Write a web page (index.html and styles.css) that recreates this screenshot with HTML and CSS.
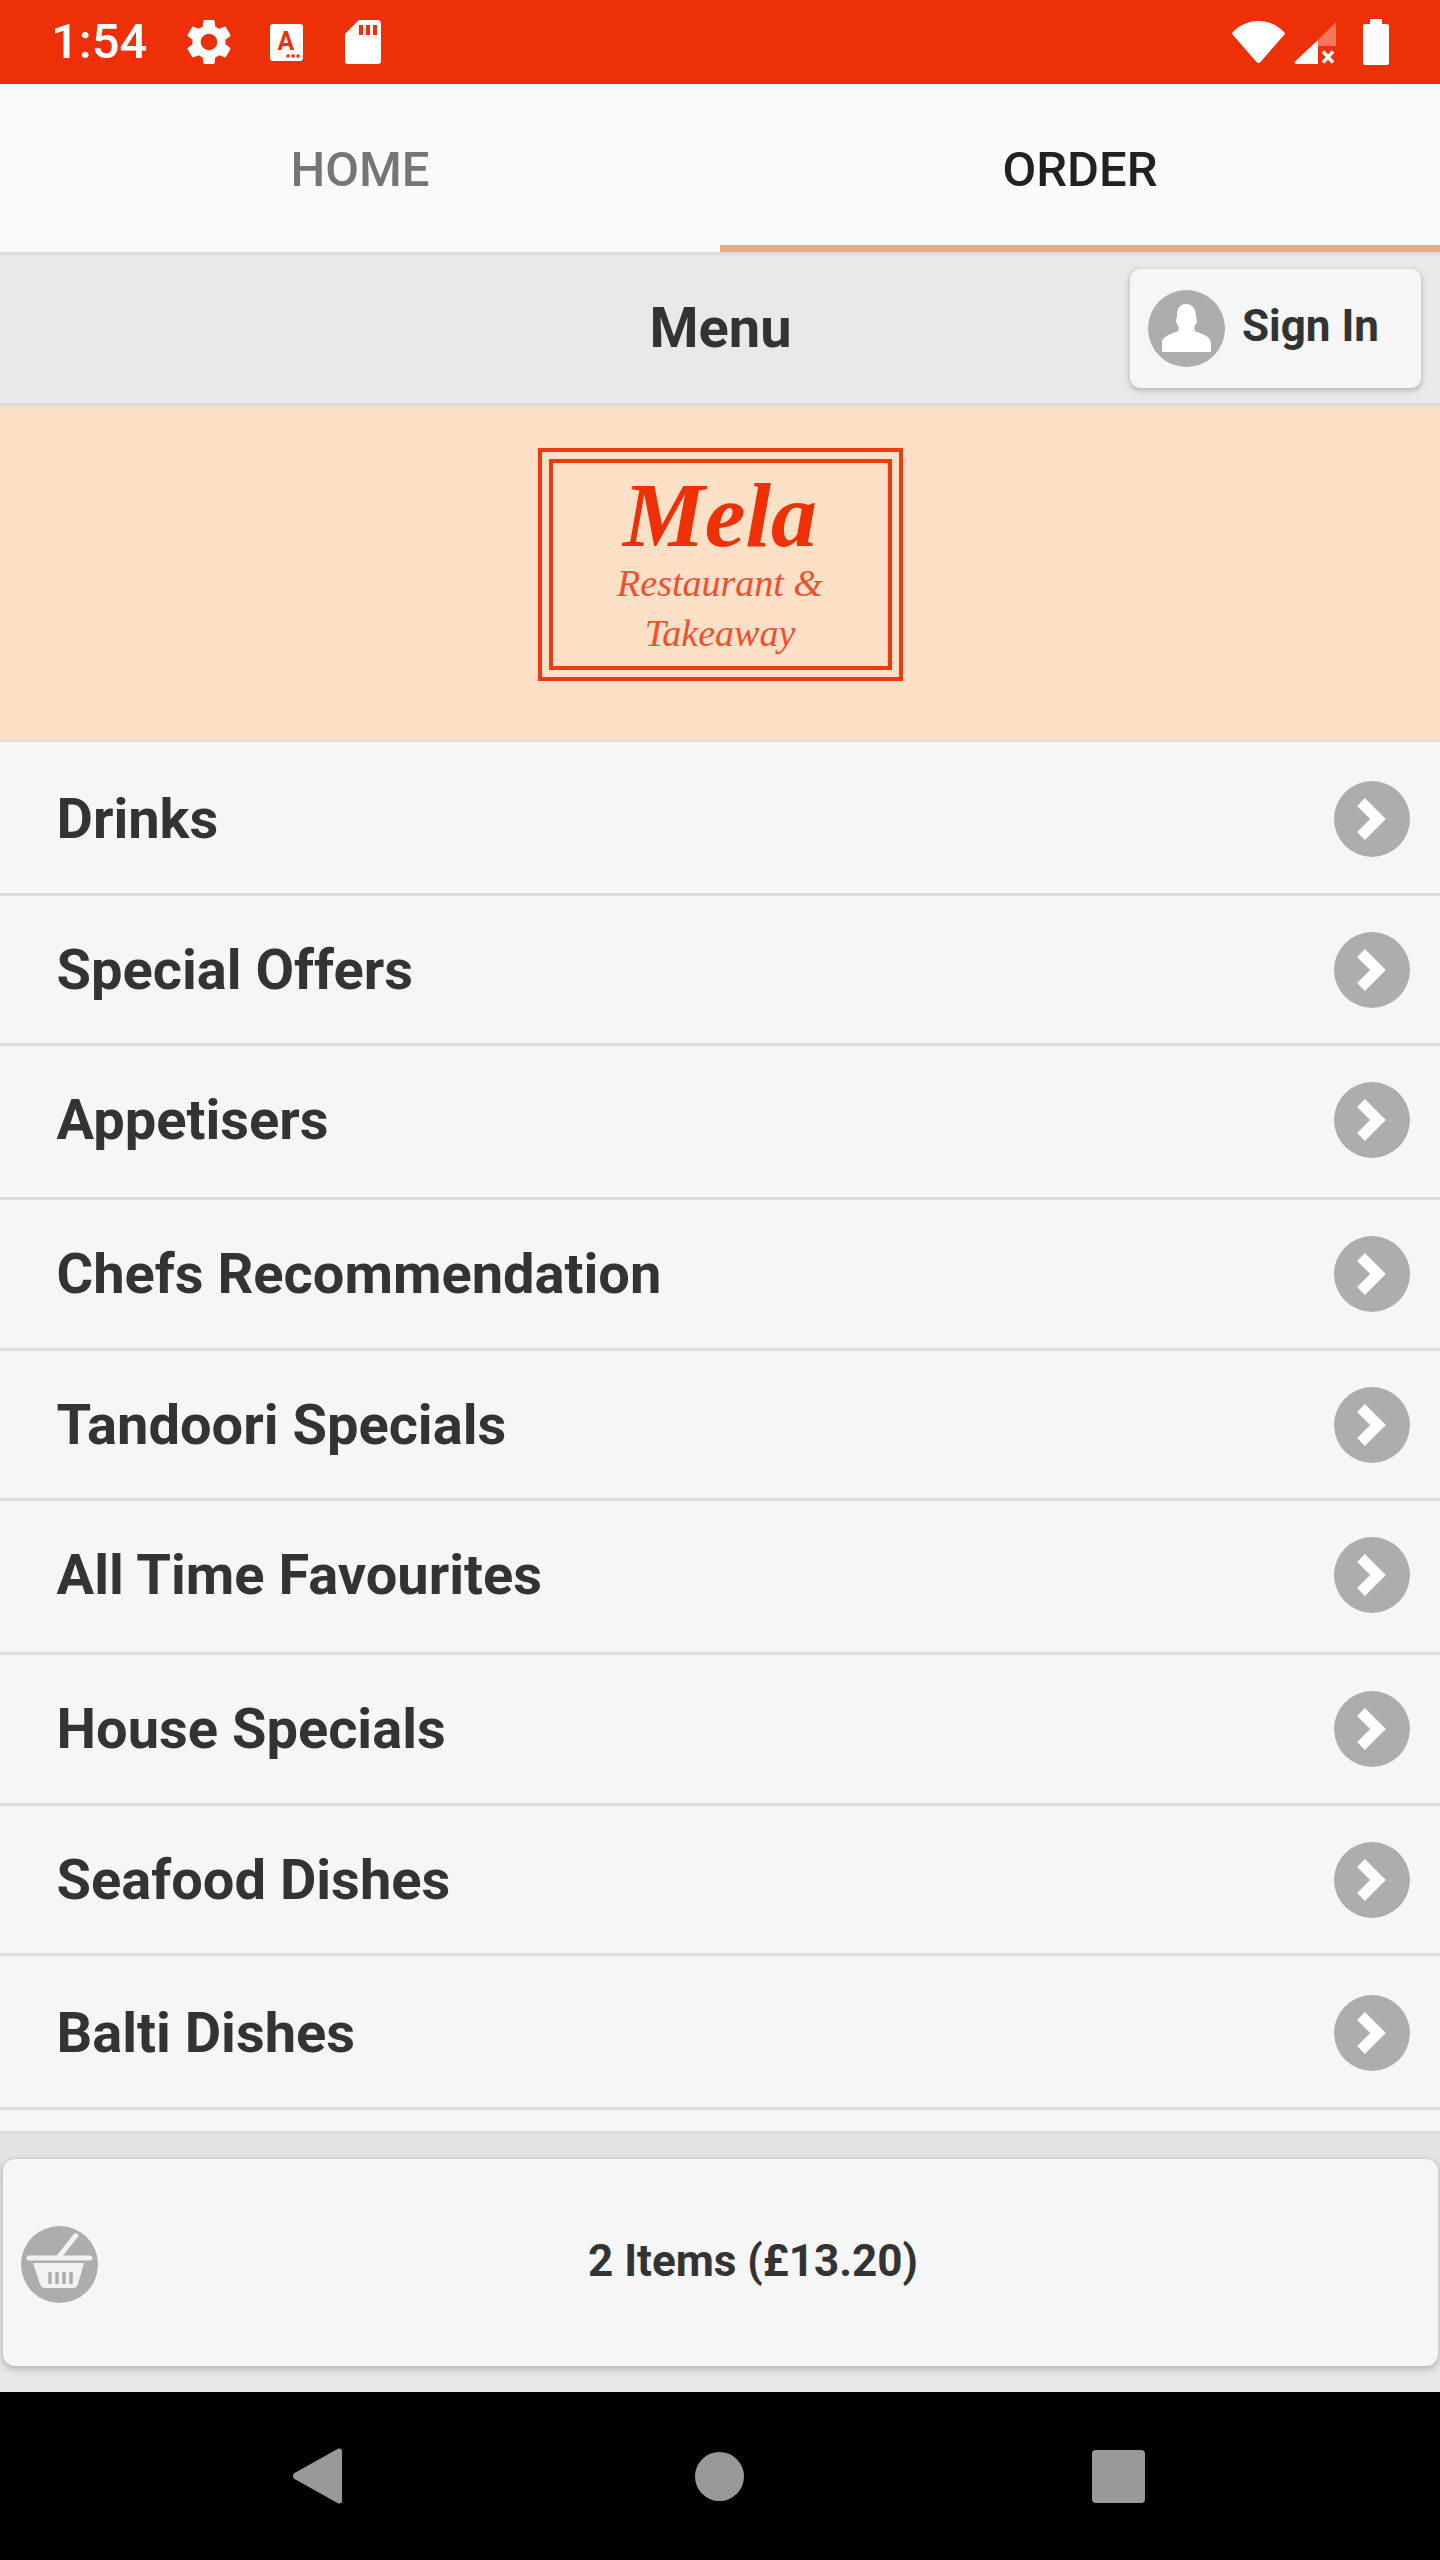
FILE: index.html
```html
<!DOCTYPE html>
<html lang="en">
<head>
<meta charset="utf-8">
<title>Menu</title>
<link rel="stylesheet" href="styles.css">
</head>
<body>
<div class="screen">
  <div class="status">
    <div class="status-left">
      <span class="time">1:54</span>
      <svg class="ic-gear" viewBox="2 2 20 20"><path fill="#fff" d="M19.14 12.94c.04-.3.06-.61.06-.94 0-.32-.02-.64-.07-.94l2.03-1.58c.18-.14.23-.41.12-.61l-1.92-3.32c-.12-.22-.37-.29-.59-.22l-2.39.96c-.5-.38-1.03-.7-1.62-.94l-.36-2.54c-.04-.24-.24-.41-.48-.41h-3.84c-.24 0-.43.17-.47.41l-.36 2.54c-.59.24-1.13.57-1.62.94l-2.39-.96c-.22-.08-.47 0-.59.22L2.74 8.87c-.12.21-.08.47.12.61l2.03 1.58c-.05.3-.09.63-.09.94s.02.64.07.94l-2.03 1.58c-.18.14-.23.41-.12.61l1.92 3.32c.12.22.37.29.59.22l2.39-.96c.5.38 1.03.7 1.62.94l.36 2.54c.05.24.24.41.48.41h3.84c.24 0 .44-.17.47-.41l.36-2.54c.59-.24 1.13-.56 1.62-.94l2.39.96c.22.08.47 0 .59-.22l1.92-3.32c.12-.22.07-.47-.12-.61l-2.01-1.58zM12 15.6c-1.98 0-3.6-1.62-3.6-3.6s1.62-3.6 3.6-3.6 3.6 1.62 3.6 3.6-1.62 3.6-3.6 3.6z"/></svg>
      <svg class="ic-a" viewBox="0 0 33 37"><rect width="33" height="37" rx="3" fill="#fff"/><text x="16" y="26" text-anchor="middle" class="ic-a-letter">A</text><circle cx="18" cy="32" r="1.8" fill="#ee3008"/><circle cx="23" cy="32" r="1.8" fill="#ee3008"/><circle cx="28" cy="32" r="1.8" fill="#ee3008"/></svg>
      <svg class="ic-sd" viewBox="0 0 36 44"><path fill="#fff" d="M14 0h18a4 4 0 0 1 4 4v37a3 3 0 0 1-3 3H3a3 3 0 0 1-3-3V14z"/><path fill="#ee3008" d="M14 5h4v10h-4zM21 5h4v10h-4zM28 5h4v10h-4z"/></svg>
    </div>
    <div class="status-right">
      <svg class="ic-wifi" viewBox="0 0 53 42"><path fill="#fff" d="M1 11C7.500 4 16.500 0 26.500 0S45.500 4 52 11a2 2 0 0 1 .5 2.500L28.500 41a2.500 2.500 0 0 1-4 0L.5 13.500A2 2 0 0 1 1 11z"/></svg>
      <svg class="ic-signal" viewBox="0 0 42 42"><path fill="#fff" fill-opacity=".35" d="M24 18 42 0v24H24z"/><path fill="#fff" d="M24 18v24H2a1.500 1.500 0 0 1-1-2.500z"/><path stroke="#fff" stroke-width="3.500" fill="none" d="M29 29.500l10 11M39 29.500l-10 11"/></svg>
      <svg class="ic-battery" viewBox="0 0 26 46"><path fill="#fff" d="M7 0h12v5h5a2 2 0 0 1 2 2v37a2 2 0 0 1-2 2H2a2 2 0 0 1-2-2V7a2 2 0 0 1 2-2h5z"/></svg>
    </div>
  </div>

  <nav class="tabs">
    <div class="tab">HOME</div>
    <div class="tab tab-active">ORDER</div>
  </nav>

  <header class="bar">
    <h1 class="bar-title">Menu</h1>
    <div class="signin">
      <svg class="ic-user" viewBox="0 0 77 77"><circle cx="38.500" cy="38.500" r="38.500" fill="#adadad"/><path fill="#fff" d="M38 14c7 0 10 6 10 12 0 2 1 3 1 5s-1 3-2 4c-1 3-1 5 0 6 3 2 16 4 16 12v9H14v-9c0-8 13-10 16-12 1-1 1-3 0-6-1-1-2-2-2-4s1-3 1-5c0-6 2-12 9-12z"/></svg>
      <span class="signin-label">Sign In</span>
    </div>
  </header>

  <section class="brand">
    <div class="logo">
      <div class="logo-inner">
        <div class="logo-name">Mela</div>
        <div class="logo-sub">Restaurant &amp;</div>
        <div class="logo-sub logo-sub-last">Takeaway</div>
      </div>
    </div>
  </section>

  <main class="list">
    <div class="row row-low"><span class="row-label">Drinks</span><svg class="ic-go" viewBox="0 0 76 76"><use href="#go"/></svg></div>
    <div class="row row-short"><span class="row-label">Special Offers</span><svg class="ic-go" viewBox="0 0 76 76"><use href="#go"/></svg></div>
    <div class="row row-high"><span class="row-label">Appetisers</span><svg class="ic-go" viewBox="0 0 76 76"><use href="#go"/></svg></div>
    <div class="row"><span class="row-label">Chefs Recommendation</span><svg class="ic-go" viewBox="0 0 76 76"><use href="#go"/></svg></div>
    <div class="row row-short"><span class="row-label">Tandoori Specials</span><svg class="ic-go" viewBox="0 0 76 76"><use href="#go"/></svg></div>
    <div class="row row-high"><span class="row-label">All Time Favourites</span><svg class="ic-go" viewBox="0 0 76 76"><use href="#go"/></svg></div>
    <div class="row"><span class="row-label">House Specials</span><svg class="ic-go" viewBox="0 0 76 76"><use href="#go"/></svg></div>
    <div class="row row-short"><span class="row-label">Seafood Dishes</span><svg class="ic-go" viewBox="0 0 76 76"><use href="#go"/></svg></div>
    <div class="row row-low"><span class="row-label">Balti Dishes</span><svg class="ic-go" viewBox="0 0 76 76"><use href="#go"/></svg></div>
  </main>

  <footer class="footer">
    <div class="basket">
      <svg class="ic-basket" viewBox="0 0 77 77">
        <circle cx="38.500" cy="38.500" r="38.500" fill="#adadad"/>
        <path d="M56 8 37 32" stroke="#f2f2f2" stroke-width="5" fill="none"/>
        <path d="M8 32h61" stroke="#f2f2f2" stroke-width="5" stroke-linecap="round" fill="none"/>
        <path d="M12 37h51l-6 21q-1 4-5 4H24q-4 0-5-4z" fill="#f2f2f2"/>
        <path d="M29 46v12M36 46v12M43 46v12M50 46v12" stroke="#adadad" stroke-width="3.500" fill="none"/>
      </svg>
      <span class="basket-label">2 Items (£13.20)</span>
    </div>
  </footer>

  <div class="navbar">
    <svg class="ic-back" viewBox="0 0 49 56"><path fill="#999" d="M1.500 25 45 .8c2-.8 4 0 4 2.500v49.400c0 2.500-2 3.300-4 2.500L1.500 31c-2-1.500-2-4.500 0-6z"/></svg>
    <span class="ic-home"></span>
    <span class="ic-recent"></span>
  </div>
</div>
<svg class="defs" aria-hidden="true"><defs><g id="go"><circle cx="38" cy="38" r="38" fill="#adadad"/><path d="M27 21l17 17-17 17" fill="none" stroke="#fff" stroke-width="11" stroke-linejoin="miter"/></g></defs></svg>
</body>
</html>
```

FILE: styles.css
```css
* { box-sizing: border-box; }
html, body { margin: 0; padding: 0; }
body { font-family: Roboto, "Liberation Sans", sans-serif; background: #000; }

.screen { width: 1440px; height: 2560px; display: flex; flex-direction: column; overflow: hidden; }

/* status bar */
.status { height: 84px; flex: none; background: #ee3008; display: flex; align-items: center; justify-content: space-between; padding: 0 51px; color: #fff; }
.status-left, .status-right { display: flex; align-items: center; }
.time { font-size: 49px; font-weight: 500; line-height: 84px; width: 94px; white-space: nowrap; }
.ic-gear { width: 46px; height: 46px; margin-left: 41px; }
.ic-a { width: 33px; height: 37px; margin-left: 38px; }
.ic-a-letter { font: 700 25px Roboto, sans-serif; fill: #ee3008; }
.ic-sd { width: 36px; height: 44px; margin-left: 42px; }
.ic-wifi { width: 53px; height: 42px; }
.ic-signal { width: 42px; height: 42px; margin-left: 9px; margin-top: 2px; }
.ic-battery { width: 26px; height: 46px; margin-left: 27px; }

/* tabs */
.tabs { height: 171px; flex: none; display: flex; background: #fafafa; border-bottom: 3px solid #dcdcdc; }
.tab { flex: 1; display: flex; align-items: center; justify-content: center; font-size: 49px; font-weight: 500; color: #757575; padding-top: 3px; }
.tab-active { color: #212121; border-bottom: 7px solid #f2a97a; padding-top: 10px; }

/* header */
.bar { height: 151px; flex: none; display: grid; grid-template-columns: 1fr auto 1fr; align-items: center; background: #e9e9e9; border-bottom: 3px solid #dcdcdc; }
.bar-title { grid-column: 2; margin: 0 0 2px 1px; font-size: 56px; font-weight: 700; color: #333; }
.signin { grid-column: 3; justify-self: end; margin: 0 19px 1px 0; width: 291px; height: 119px; display: flex; align-items: center; padding-left: 18px; background: #f6f6f6; border-radius: 10px; box-shadow: 0 2px 5px 1px rgba(0, 0, 0, .2); }
.ic-user { width: 77px; height: 77px; flex: none; }
.signin-label { margin-left: 17px; margin-bottom: 5px; font-size: 44px; font-weight: 700; color: #333; white-space: nowrap; }

/* brand */
.brand { height: 336px; flex: none; display: flex; align-items: center; justify-content: center; background: #fde0c6; border-bottom: 3px solid #dedede; padding-bottom: 17px; }
.logo { width: 365px; height: 233px; flex: none; padding: 7px; border: 4px solid #ee3a10; }
.logo-inner { height: 100%; border: 4px solid #ee3a10; display: flex; flex-direction: column; align-items: center; color: #ee3a10; font-family: "Liberation Serif", serif; }
.logo-name { font-size: 92px; line-height: 92px; font-weight: 700; font-style: italic; margin-top: 6px; color: #ee3008; }
.logo-sub { font-size: 38px; line-height: 44px; font-style: italic; color: #ee5030; }
.logo-sub-last { margin-top: 6px; }

/* list */
.list { height: 1392px; flex: none; background: #f6f6f6; border-bottom: 3px solid #dedede; }
.row { height: 151px; display: flex; align-items: center; justify-content: space-between; padding: 0 30px 0 56.500px; border-bottom: 3px solid #dedede; }
.row-short { height: 150px; }
.row-low { height: 154px; padding-top: 3px; }
.row-high { height: 154px; padding-bottom: 3px; }
.row-label { font-size: 56px; font-weight: 700; color: #333; white-space: nowrap; }
.ic-go { width: 76px; height: 76px; flex: none; }

/* footer */
.footer { flex: 1; min-height: 0; background: linear-gradient(#e2e2e2, #e7e7e7 20%); padding: 25px 2px 26px 3px; }
.basket { height: 207px; display: flex; align-items: center; padding: 0 30px 0 18px; background: #f6f6f6; border-radius: 12px; box-shadow: 0 2px 6px 1px rgba(0, 0, 0, .22); }
.ic-basket { width: 77px; height: 77px; flex: none; margin-top: 4px; }
.basket-label { flex: 1; text-align: center; margin-bottom: 3px; font-size: 44px; font-weight: 700; color: #333; }

/* nav bar */
.navbar { height: 168px; flex: none; background: #000; display: flex; align-items: center; padding: 0 295px 0 293px; justify-content: space-between; }
.ic-back { width: 49px; height: 56px; }
.ic-home { width: 49px; height: 49px; margin-left: 5px; border-radius: 50%; background: #999; }
.ic-recent { width: 53px; height: 53px; border-radius: 4px; background: #999; }
.defs { display: none; }
```
